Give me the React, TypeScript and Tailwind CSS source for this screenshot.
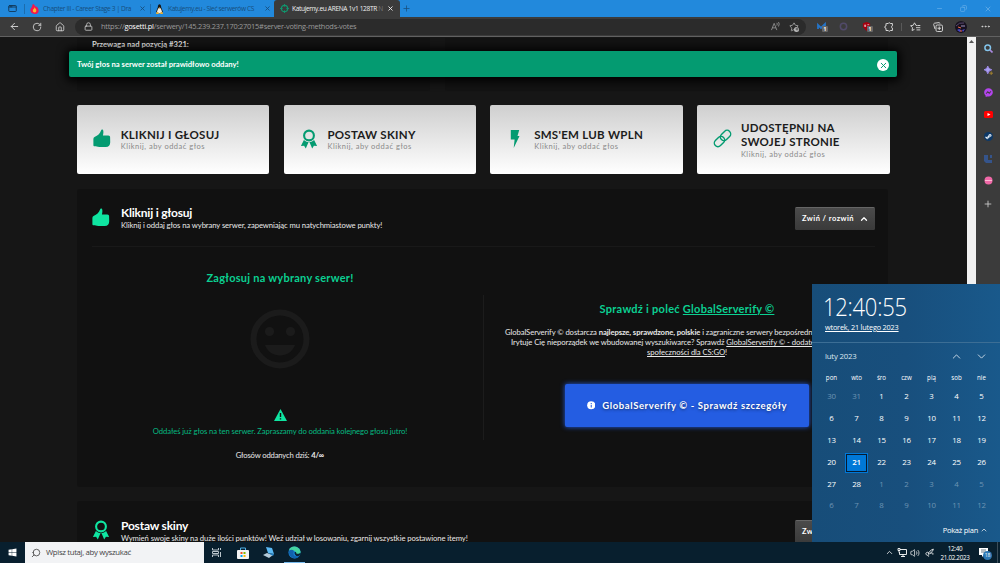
import React from "react";
import { ArrowLeft, RotateCw, House, Lock, Star, Minus, Copy, X, Plus, Ellipsis, Search, ChevronUp, ChevronDown, Volume2, AppWindow } from "lucide-react";
import { FaSteamSymbol, FaWindows, FaFacebookMessenger } from "react-icons/fa";

const segoe = "font-['Open_Sans','Noto_Sans',sans-serif]";

function Thumb({ className }: { className: string }) {
  return (
    <svg viewBox="0 0 18 19" className={className} fill="currentColor">
      <path d="M8.3 1.2C8.5.2 9.7 0 10.3.8c.7 1.1.4 3.6-.1 5.5h5.5c1.3 0 2 .9 1.9 2l.1 5c0 3.1-1.500 5-4.600 5H6.500c-2-.1-3.300-.8-4.800-.8C.7 17.500.4 17 .4 16.200V10c0-.9.4-1.600 1.200-2C5 6.200 7 4.700 8.300 1.200z" />
    </svg>
  );
}

function Ribbon({ className }: { className: string }) {
  return (
    <svg viewBox="0 0 18 20" className={className}>
      <circle cx="9" cy="6.500" r="4.900" fill="none" stroke="currentColor" strokeWidth="2.100" />
      <path d="M3.900 11 .9 17l3.200-.3 1.700 2.700 2.800-6.300c-1.900 0-3.400-.8-4.700-2.100zM14.100 11l3 6-3.200-.3-1.700 2.700-2.800-6.300c1.900 0 3.400-.8 4.700-2.100z" fill="currentColor" />
    </svg>
  );
}

function Flash({ className }: { className: string }) {
  return (
    <svg viewBox="0 0 18 20" className={className} fill="currentColor">
      <path d="M4.800 1h8.400l-1.700 6h2L7.700 19l.9-8.500H4.800z" />
    </svg>
  );
}

function Chain({ className }: { className: string }) {
  return (
    <svg viewBox="0 0 20 20" className={className} fill="none" stroke="currentColor" strokeWidth="1.500">
      <g transform="rotate(-45 10 10)">
        <rect x="-.6" y="6.200" width="12.200" height="7.600" rx="3.800" />
        <rect x="8.400" y="6.200" width="12.200" height="7.600" rx="3.800" />
      </g>
    </svg>
  );
}

function Badge() {
  return <span className="absolute left-[5px] top-[4px] flex h-[6px] w-[6px] items-center justify-center rounded-[1px] bg-[#666] text-[5px] font-bold leading-none text-white">1</span>;
}

function TitleBar() {
  return (
    <div className="flex h-[17px] shrink-0 items-center bg-[#2289dc] text-[6.600px] text-[#174f7e]">
      <AppWindow className="ml-[8px] h-[9px] w-[9px] text-[#123a5c]" strokeWidth={2.500} />
      <div className="ml-[7px] h-[10px] w-px bg-[#1c6cad]" />
      <svg viewBox="0 0 10 12" className="ml-[5px] h-[10px] w-[9px]"><path d="M3 0c3 1 2 3 4 3 2 1 3 3 3 5 0 3-2 4-5 4S0 10 0 7c0-2 2-3 2-4z" fill="#f3174f" /><path d="M5 4c1 2 3 3 2 5-1 2-4 1-4-1 0-2 2-2 2-4z" fill="#ffb72c" /></svg>
      <span className="ml-[4px] w-[93px] whitespace-nowrap pt-px tracking-[-0.36px]">Chapter III - Career Stage 3 | Dra</span>
      <X className="ml-[3px] h-[7px] w-[7px]" strokeWidth={3} />
      <div className="ml-[4px] h-[10px] w-px bg-[#1c6cad]" />
      <svg viewBox="0 0 10 12" className="ml-[4px] h-[10px] w-[9px]"><path d="M3 4c0-5 4-5 4 0l2 5-1 2H2L1 9z" fill="#161616" /><path d="M3.500 5h3L8 9 7 11H3L2 9z" fill="#f3eee0" /><path d="M4 4h2l-1 1zM1 10h3v2H1zm5 0h3v2H6z" fill="#f2b12c" /></svg>
      <span className="ml-[4px] w-[93px] whitespace-nowrap pt-px tracking-[-0.38px]">Katujemy.eu - Sieć serwerów CS</span>
      <X className="ml-[3px] h-[7px] w-[7px]" strokeWidth={3} />
      <div className="ml-[3px] flex h-[17px] w-[126px] items-center rounded-t-[3px] bg-[#3b3b3b] text-[#f0f0f0]">
        <svg viewBox="0 0 10 10" className="ml-[6px] h-[9px] w-[9px]"><circle cx="5" cy="5" r="3.500" fill="none" stroke="#10966d" strokeWidth="1.300" /><path d="M5 0v3M5 7v3M0 5h3M7 5h3" stroke="#10966d" /></svg>
        <span className="ml-[3px] w-[94px] whitespace-nowrap pt-px tracking-[-0.35px]">Katujemy.eu ARENA 1v1 128TR <span className="text-[#777]">N</span></span>
        <X className="ml-[1px] h-[7px] w-[7px]" strokeWidth={3} />
      </div>
      <Plus className="ml-[2px] h-[9px] w-[9px]" />
      <div className="flex-1" />
      <Minus className="h-[7px] w-[7px] text-[#72b5ec]" />
      <Copy className="ml-[17px] h-[7px] w-[7px] -scale-x-100 text-[#72b5ec]" />
      <X className="ml-[17px] mr-[8px] h-[8px] w-[8px] text-[#72b5ec]" />
    </div>
  );
}

function Toolbar() {
  return (
    <div className="flex h-[20px] shrink-0 items-center border-b border-[#616161] bg-[#3b3b3b] text-[#d6d6d6]">
      <ArrowLeft className="ml-[9px] h-[11px] w-[11px]" />
      <RotateCw className="ml-[12px] h-[10px] w-[10px]" />
      <House className="ml-[13px] h-[10px] w-[10px]" />
      <div className="ml-[10px] flex h-[16px] w-[731px] items-center rounded-full bg-[#2b2b2b] text-[7.400px] text-[#9a9a9a]">
        <Lock className="ml-[9px] h-[9px] w-[9px] text-[#d6d6d6]" />
        <span className="ml-[8px] whitespace-nowrap tracking-[-0.23px]">https://<span className="text-white">gosetti.pl</span>/serwery/145.239.237.170:27015#server-voting-methods-votes</span>
        <div className="flex-1" />
        <svg viewBox="0 0 10 10" className="h-[9px] w-[9px]" fill="none" stroke="#999"><path d="M.5 9 3.500 1.500 6.500 9M1.500 6.500h4M6.500 1q1 1 0 3M8.300 0q1.700 2 0 5" strokeWidth=".9" /></svg>
        <div className="relative ml-[9px] mr-[7px] h-[10px] w-[10px]">
          <Star className="h-[10px] w-[10px] text-[#aaa]" />
          <span className="absolute left-[5px] top-[5px] flex h-[5px] w-[5px] items-center justify-center rounded-full bg-[#bbb] text-[#2b2b2b]"><Plus className="h-[4px] w-[4px]" strokeWidth={4} /></span>
        </div>
      </div>
      <div className="relative ml-[11px] h-[9px] w-[9px] text-[#2677cf]"><svg viewBox="0 0 9 9"><path d="M1 7V3l3 3 4-4v5" fill="none" stroke="#2474c8" strokeWidth="1.800" /></svg><Badge /></div>
      <svg viewBox="0 0 10 10" className="ml-[13px] h-[9px] w-[9px]"><circle cx="5" cy="5" r="3.500" fill="none" stroke="#514a69" strokeWidth="1.700" /></svg>
      <div className="relative ml-[14px] h-[9px] w-[9px]"><svg viewBox="0 0 10 10"><path d="m5 0 4 1.500v4L5 10 1 5.500v-4z" fill="#a50010" /><path d="M3 3v2h1V3m2 0h2M6 5h2" stroke="#fff" strokeWidth=".7" fill="none" /></svg><Badge /></div>
      <svg viewBox="0 0 10 10" className="ml-[13px] h-[10px] w-[10px]" fill="none" stroke="currentColor" strokeWidth="1"><path d="M2.500 1.500h1.700a1.200 1.200 0 0 1 2.200 0h2v2.300a1.200 1.200 0 0 0 0 2.300v2.400h-2a1.200 1.200 0 0 1-2.200 0H2V6.300a1.200 1.200 0 0 1 0-2.400V1.500z" /></svg>
      <div className="ml-[7px] h-[8px] w-px bg-[#595959]" />
      <svg viewBox="0 0 11 10" className="ml-[8px] h-[10px] w-[11px]" fill="none" stroke="currentColor" strokeWidth=".95"><path d="M7 3.500 5.900 3.300 4.500.8 3.200 3.300.6 3.700l1.900 2-.4 2.800 2.400-1.200M7.300 3.500h3M6 5.700h4.300M6.500 7.900h3.800" /></svg>
      <svg viewBox="0 0 10 10" className="ml-[12px] h-[10px] w-[10px]" fill="none" stroke="currentColor" strokeWidth=".95"><rect x="3" y="3" width="6.500" height="6.500" rx="1.300" /><path d="M6.250 4.500v3.500M4.500 6.250H8M2 7 .7 2.500Q.6 1.500 1.500 1.200L6 .6q.8 0 1 1" /></svg>
      <svg viewBox="0 0 12 12" className="ml-[12px] h-[12px] w-[12px]"><circle cx="6" cy="6" r="6" fill="#17111f" /><path d="M2 9l2-1 2 1-1 2zM7 9l3-1-2 3z" fill="#4747c8" /><path d="M3 6l3 1M5 10h2" stroke="#ef6a45" /><path d="M6 5h4" stroke="#c4b4e8" strokeWidth=".8" /><path d="M1 5q3-4 8-3" stroke="#59496e" fill="none" /></svg>
      <Ellipsis className="ml-[13px] h-[11px] w-[11px]" />
    </div>
  );
}

type MethodProps = { icon: React.ReactNode; title: React.ReactNode };

function Method({ icon, title }: MethodProps) {
  return (
    <div className="flex h-[69px] w-[192.300px] items-center rounded-[2px] bg-gradient-to-b from-[#cfcfcf] to-white text-[#049b71]">
      <div className="ml-[16px] w-[20px] pb-[2px]">{icon}</div>
      <div className="ml-[7.700px] whitespace-nowrap pt-px">
        <div className="text-[11.500px] font-bold leading-[14.500px] tracking-[0.27px] text-[#1c1c1c]">{title}</div>
        <div className="text-[7.500px] leading-[10px] tracking-[0.5px] text-[#8a8a8a]">Kliknij, aby oddać głos</div>
      </div>
    </div>
  );
}

function SectionHead({ icon, title, text }: { icon: React.ReactNode; title: string; text: React.ReactNode }) {
  return (
    <div className="flex h-[57px] items-center border-b border-[#191919]">
      <div className="w-[20px] pb-[2px]">{icon}</div>
      <div className="ml-[9px] flex-1 whitespace-nowrap pt-px">
        <div className="text-[12px] font-bold leading-[13px] tracking-[-0.22px] text-white">{title}</div>
        <div className="leading-[12px]">{text}</div>
      </div>
      <button className="flex h-[23px] w-[80px] items-center rounded-[1.500px] border-t border-[#666] bg-gradient-to-b from-[#4b4b4b] to-[#3a3a3a] pl-[7px] text-[7.500px] font-bold tracking-[0.45px] text-white">
        <span className="w-[56px] whitespace-nowrap text-left">Zwiń / rozwiń</span>
        <ChevronUp className="ml-[1px] h-[10px] w-[10px]" strokeWidth={3} />
      </button>
    </div>
  );
}

function Page() {
  return (
    <main className="relative h-[505px] w-[967px] overflow-hidden bg-[#161616] pl-[77px] pt-px font-['Lato','Noto_Sans',sans-serif] text-[7.700px] text-[#e8e8e8]">
      <div className="flex h-[53px] w-[811px] gap-[15px] overflow-hidden">
        <div className="w-[353px] rounded-b-[3px] bg-[#131313] pl-[15px] font-bold leading-[12px]"><span>Przewaga nad pozycją #321:</span></div>
        <div className="flex-1 rounded-b-[3px] bg-[#131313]" />
      </div>
      <div className="absolute left-[69px] top-[14px] flex h-[26px] w-[828px] items-center rounded-[2px] bg-[#049b71] pl-[8px] pr-[8px] font-bold text-white shadow-[0_1px_10px_3px_#000]">
        <span className="pt-px tracking-[-0.01px]">Twój głos na serwer został prawidłowo oddany!</span>
        <span className="ml-auto mt-[2px] flex h-[12px] w-[12px] items-center justify-center rounded-full bg-white text-[#049b71]"><X className="h-[9px] w-[9px]" strokeWidth={2.600} /></span>
      </div>
      <div className="mt-[14px] flex w-[812.500px] justify-between">
        <Method icon={<Thumb className="h-[19px] w-[17.500px]" />} title="KLIKNIJ I GŁOSUJ" />
        <Method icon={<Ribbon className="h-[20px] w-[18px]" />} title="POSTAW SKINY" />
        <Method icon={<Flash className="h-[20px] w-[18px]" />} title="SMS'EM LUB WPLN" />
        <Method icon={<Chain className="h-[19px] w-[19px]" />} title={<>UDOSTĘPNIJ NA<br />SWOJEJ STRONIE</>} />
      </div>
      <section className="mt-[15px] h-[298px] w-[811px] rounded-[3px] bg-[#111] pl-[15px] pr-[13px] pt-px">
        <SectionHead icon={<Thumb className="h-[19px] w-[17.500px] text-[#0fe5a1]" />} title="Kliknij i głosuj" text={<span className="tracking-[-0.09px]">Kliknij i oddaj głos na wybrany serwer, zapewniając mu natychmiastowe punkty!</span>} />
        <div className="flex h-[240px]">
          <div className="flex w-[391px] flex-col items-center whitespace-nowrap pr-[15px]">
            <h2 className="mt-[24px] text-[11px] font-bold leading-[14px] tracking-[0.26px] text-[#0bd091]">Zagłosuj na wybrany serwer!</h2>
            <svg viewBox="0 0 60 60" className="mt-[24px] h-[60px] w-[60px]"><circle cx="30" cy="30" r="26.500" fill="none" stroke="#1b1b1b" strokeWidth="6" /><circle cx="19.500" cy="22.500" r="4.600" fill="#1b1b1b" /><circle cx="40.500" cy="22.500" r="4.600" fill="#1b1b1b" /><path d="M15 36h30c-5 14-25 14-30 0z" fill="#1b1b1b" /></svg>
            <svg viewBox="0 0 13 12" className="mt-[40px] h-[12px] w-[13px]"><path d="M6.500 0 13 12H0z" fill="#0fe5a1" /><path d="M6.500 4v4M6.500 9.300v1.300" stroke="#111" strokeWidth="1.400" /></svg>
            <p className="mt-[4px] leading-[12px] tracking-[-0.09px] text-[#06b981]">Oddałeś już głos na ten serwer. Zapraszamy do oddania kolejnego głosu jutro!</p>
            <p className="mt-[12px] leading-[13px] tracking-[-0.18px]">Głosów oddanych dziś: <b>4/∞</b></p>
          </div>
          <div className="mt-[48px] h-[145px] w-px bg-[#1c1c1c]" />
          <div className="ml-[16px] flex w-[374px] flex-col items-center whitespace-nowrap">
            <h2 className="mt-[55px] text-[11px] font-bold leading-[14px] tracking-[0.26px] text-[#0bd091]">Sprawdź i poleć <u>GlobalServerify ©</u></h2>
            <div className="mt-[11px] w-[364px] leading-[10px] tracking-[-0.09px]">
              <div>GlobalServerify © dostarcza <b>najlepsze, sprawdzone, polskie</b> i zagraniczne serwery bezpośredn</div>
              <div className="pl-[6px] tracking-[-0.07px]">Irytuje Cię nieporządek we wbudowanej wyszukiwarce? Sprawdź <u>GlobalServerify © - dodate</u></div>
              <div className="text-center"><u>społeczności dla CS:GO</u>!</div>
            </div>
            <button className="mt-[27px] flex h-[43px] w-[244px] items-center justify-center gap-[7px] rounded-[2px] bg-[#245de2] text-[9.500px] font-bold tracking-[0.6px] text-white shadow-[0_0_5px_#245de2]">
              <svg viewBox="0 0 9 9" className="h-[8.500px] w-[8.500px]"><circle cx="4.500" cy="4.500" r="4.300" fill="#fff" /><path d="M4.500 2v1.200M4.500 4.100v2.700" stroke="#245de2" strokeWidth="1.100" /></svg>
              <span className="pt-px [text-shadow:0_1px_3px_rgba(0,0,0,.5)]">GlobalServerify © - Sprawdź szczegóły</span>
            </button>
          </div>
        </div>
      </section>
      <section className="mt-[14px] h-[80px] w-[811px] rounded-[3px] bg-[#111] pl-[15px] pr-[13px] pt-[2px]">
        <SectionHead icon={<Ribbon className="h-[20px] w-[18px] text-[#0fe5a1]" />} title="Postaw skiny" text={<span className="tracking-[-0.095px]">Wymień swoje skiny na duże ilości punktów! Weź udział w losowaniu, zgarnij wszystkie postawione itemy!</span>} />
      </section>
    </main>
  );
}

function Sidebar() {
  return (
    <aside className="flex w-[24px] flex-col items-center bg-[#3b3b3b] pt-[7px] text-[#d0d0d0]">
      <svg viewBox="0 0 9 9" className="h-[9px] w-[9px]" fill="none"><circle cx="3.700" cy="3.700" r="2.800" stroke="#83c5ec" strokeWidth="1.500" /><path d="m6 6 2.500 2.500" stroke="#a98ae0" strokeWidth="1.700" /></svg>
      <svg viewBox="0 0 10 10" className="mt-[13px] h-[9px] w-[9px]"><path d="M4.200 0Q5 3.500 8.700 4.200 5 5 4.200 8.700 3.500 5 0 4.200 3.500 3.500 4.200 0z" fill="#a9a0f5" stroke="#a58cf0" strokeWidth=".9" /><path d="M8 6v4M6 8h4" stroke="#a8852e" /></svg>
      <FaFacebookMessenger className="mt-[13px] h-[9px] w-[9px] text-[#b344ed]" />
      <div className="mt-[13px] flex h-[9px] items-center"><svg viewBox="0 0 9 7" className="h-[7px] w-[9px]"><rect width="9" height="7" rx="1.500" fill="#f00" /><path d="m3.500 2 3 1.500-3 1.500z" fill="white" /></svg></div>
      <span className="mt-[13px] flex h-[9px] w-[9px] items-center justify-center rounded-full bg-[#0d3866] text-[#e4edf5]"><FaSteamSymbol className="h-[7px] w-[7px]" /></span>
      <svg viewBox="0 0 9 9" className="mt-[13px] h-[9px] w-[9px]"><path d="M0 1h4v5h4v3H2L0 7zM6 1h2v3H6z" fill="#35548b" /></svg>
      <svg viewBox="0 0 9 9" className="mt-[13px] h-[9px] w-[9px]"><circle cx="4.500" cy="4.500" r="4" fill="#ef68a7" /><path d="M1 4.500h7" stroke="#ffb8d4" /></svg>
      <Plus className="mt-[14px] h-[10px] w-[10px]" />
    </aside>
  );
}

const days = [30, 31, ...Array.from({ length: 28 }, (_, i) => i + 1), ...Array.from({ length: 12 }, (_, i) => i + 1)];

function CalendarFlyout() {
  return (
    <div className="absolute left-[812px] top-[284px] flex h-[258px] w-[188px] flex-col bg-gradient-to-r from-[#174d79] via-[#184f7d] to-[#19598b] text-white">
      <div className="h-[59px] border-b border-[#3c6e95] pl-[11px] pt-[6px]">
        <div className="origin-left scale-x-[0.88] whitespace-nowrap text-[25px] font-light leading-[33px] tracking-[-0.3px]">12:40:55</div>
        <div className="ml-[2px] whitespace-nowrap text-[7.300px] leading-[9px] tracking-[-0.18px] underline underline-offset-1">wtorek, 21 lutego 2023</div>
      </div>
      <div className="flex h-[27px] items-center pl-[13px] text-[7.800px] text-[#dce7f0]">
        <span className="tracking-[-0.2px]">luty 2023</span>
        <ChevronUp className="ml-auto h-[13px] w-[13px]" strokeWidth={1.600} />
        <ChevronDown className="ml-[12px] mr-[12.500px] h-[13px] w-[13px]" strokeWidth={1.600} />
      </div>
      <div className="ml-[7px] grid w-[175px] grid-cols-7 text-center text-[6.200px] leading-[15px]">
        {["pon", "wto", "śro", "czw", "pią", "sob", "nie"].map((d) => <span key={d}>{d}</span>)}
      </div>
      <div className="ml-[7px] mt-px grid w-[175px] auto-rows-[21.900px] grid-cols-7 text-center text-[7.900px] tracking-[-0.2px]">
        {days.map((d, i) => (
          <div key={i} className="flex items-center justify-center">
            {i === 22 ? (
              <span className="flex h-[20px] w-[23px] items-center justify-center border border-[#0078d7] bg-[#0078d7] font-semibold shadow-[inset_0_0_0_1px_#061b31]">{d}</span>
            ) : (
              <span className={i < 2 || i > 29 ? "text-[#6d94b3]" : ""}>{d}</span>
            )}
          </div>
        ))}
      </div>
      <div className="mr-[12px] mt-[6px] flex items-center justify-end gap-[2px] whitespace-nowrap text-[7.500px] leading-[14px] tracking-[-0.25px]">Pokaż plan <ChevronUp className="h-[8px] w-[8px]" /></div>
    </div>
  );
}

function Taskbar() {
  return (
    <footer className="flex h-[21px] shrink-0 items-center bg-[#081f2e] text-white">
      <FaWindows className="ml-[8px] h-[9px] w-[9px]" />
      <div className="ml-[8px] flex h-[21px] w-[179px] items-center bg-[#f2f3f5] text-[7.800px] text-[#454545]">
        <Search className="ml-[6px] h-[10px] w-[10px] -scale-x-100" />
        <span className="ml-[5px] whitespace-nowrap tracking-[-0.34px]">Wpisz tutaj, aby wyszukać</span>
      </div>
      <svg viewBox="0 0 10 9" className="ml-[8px] h-[9px] w-[10px]" fill="none" stroke="#b9c4cb"><path d="M.5 0v2h6V0M.5 9V7h6v2M.5 3.500h6v2h-6zM8.500 0v2M8.500 4v5" /></svg>
      <svg viewBox="0 0 12 12" className="ml-[15px] h-[12px] w-[12px]"><path d="M3.500 3V1h5v2" fill="none" stroke="#4fb2e7" /><rect y="3" width="12" height="9" rx="1" fill="#f4f4f4" /><path fill="#f25022" d="M3.500 5h2v2h-2z" /><path fill="#7fba00" d="M6.500 5h2v2h-2z" /><path fill="#00a4ef" d="M3.500 8h2v2h-2z" /><path fill="#ffb900" d="M6.500 8h2v2h-2z" /></svg>
      <svg viewBox="0 0 12 11" className="ml-[14px] h-[11px] w-[12px]"><path d="m3 0 6 1 2 6-6-1z" fill="#5bb9f3" /><path d="m0 8 4-2 6 2-4 3z" fill="#b5cbd9" /><path d="m5 6 6 1-1 2z" fill="#2682c3" /></svg>
      <div className="ml-[9px] flex h-[21px] w-[21px] items-center justify-center border-b border-[#76b9ed]">
        <svg viewBox="0 0 14 14" className="h-[13px] w-[13px]"><circle cx="7" cy="7" r="6.500" fill="#1686d9" /><path d="M1 5C2-1 12-1 13.500 6c.5 3-3 4-5 3 1-3-1-5-7.500-4z" fill="#44d4a0" /><path d="M1 5c4-2 6 0 5 2-1 4 3 5 6 4-4 5-12 1-11-6z" fill="#1262ae" /><path d="M7 7c0-1 2-1 2 1 2 1 4 0 4-1l1 2-3 2C8 11 7 9 7 7z" fill="#082236" /></svg>
      </div>
      <div className="flex-1" />
      <ChevronUp className="h-[9px] w-[9px]" />
      <svg viewBox="0 0 10 9" className="ml-[3px] h-[9px] w-[10px]" fill="none" stroke="white" strokeWidth=".9"><path d="M3 1.500h6.500v5H2.500V4M1 .5h2v2H1zM2 2.500v2M4 8.500h4M6 6.500v2" /></svg>
      <Volume2 className="ml-[3px] h-[10px] w-[10px]" strokeWidth={1.700} />
      <svg viewBox="0 0 10 10" className="ml-[5px] h-[9px] w-[9px]" fill="none" stroke="white" strokeWidth=".9"><path d="M9.300 1.200Q7 1.200 4.200 5.200L3.500 7l1.800-.7Q9.300 3.500 9.300 1.200zM4 5C2 4 0 6 1.500 7.500S5 8 4 9.500M6 6c2-1 4 0 2.500 1.500" /></svg>
      <div className="ml-[5px] w-[32px] whitespace-nowrap text-center text-[6.300px] leading-[9px] tracking-[-0.3px]">12:40<br />21.02.2023</div>
      <div className="relative ml-[8px] mr-[8px] h-[9px] w-[10px]">
        <svg viewBox="0 0 9 9" className="h-[9px] w-[9px]"><path d="M0 0h9v7H5L3 9V7H0z" fill="white" /><path d="M2 2h5M2 4h5" stroke="#294657" strokeWidth=".7" /></svg>
        <span className="absolute left-[4px] top-[3px] flex h-[9px] w-[9px] items-center justify-center rounded-full bg-[#2d77b2] text-[5px] leading-none">18</span>
      </div>
      <div className="mr-[2px] h-[21px] w-px bg-[#3b4d59]" />
    </footer>
  );
}

export default function App() {
  return (
    <div className={`relative flex h-[563px] w-[1000px] flex-col overflow-hidden bg-[#161616] ${segoe}`}>
      <TitleBar />
      <Toolbar />
      <div className="flex h-[505px] shrink-0">
        <Page />
        <div className="flex w-[9px] flex-col items-center bg-[#f1f1f1] pt-[3px]"><svg viewBox="0 0 5 3" className="h-[3px] w-[5px]"><path d="M0 3 2.500 0 5 3z" fill="#555" /></svg></div>
        <Sidebar />
      </div>
      <Taskbar />
      <CalendarFlyout />
    </div>
  );
}
